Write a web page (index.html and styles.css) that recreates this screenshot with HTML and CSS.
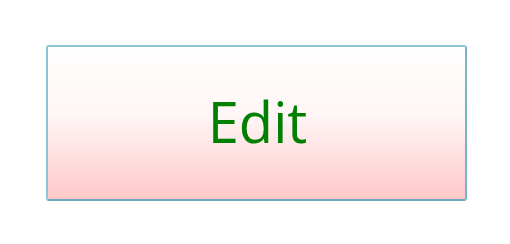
FILE: index.html
```
<!DOCTYPE html>
<html>
<head>
<meta charset="utf-8">
<link rel="stylesheet" href="styles.css">
</head>
<body>
<div class="stage">
  <button class="edit-btn">Edit</button>
</div>
</body>
</html>
```
FILE: styles.css
```
html, body {
  margin: 0;
  padding: 0;
  background: #ffffff;
}
.stage {
  width: 510px;
  height: 244px;
  padding: 45px 0 0 46px;
  box-sizing: border-box;
}
.edit-btn {
  display: flex;
  align-items: center;
  justify-content: center;
  width: 421px;
  height: 156px;
  box-sizing: border-box;
  margin: 0;
  padding: 0 0 5px 2px;
  border: 2px solid #8ec6d8;
  border-right-color: #7ab4c8;
  border-bottom-color: #6fa6ba;
  border-radius: 3px;
  background: linear-gradient(to bottom, #fffefe 0%, #fff6f6 45%, #ffc8c8 100%);
  color: #008000;
  font-family: "Open Sans", "DejaVu Sans", sans-serif;
  font-size: 56px;
  line-height: 1;
}
```
